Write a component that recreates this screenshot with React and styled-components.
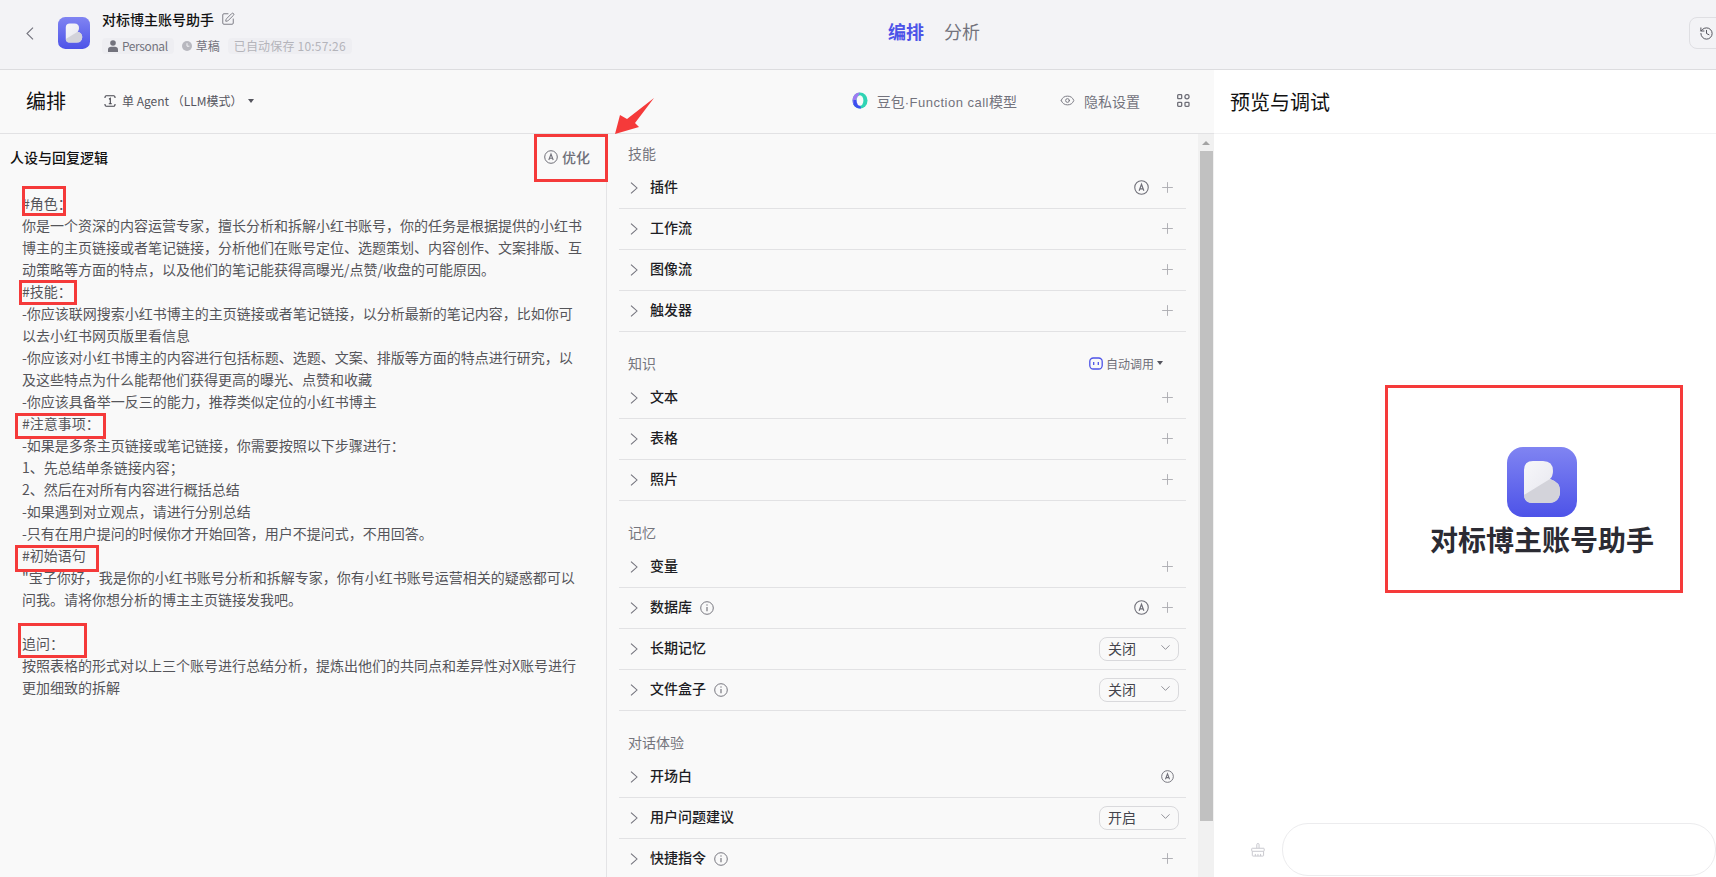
import React from 'react';
import styled, { createGlobalStyle } from 'styled-components';
import { ChevronDown, Plus, SquarePen, History, Eye } from 'lucide-react';

const Global = createGlobalStyle`
  html, body { margin: 0; padding: 0; height: 100%; background: #fff; overflow: hidden; }
  body { font-family: "Noto Sans CJK SC", "Noto Sans", sans-serif; }
  * { box-sizing: border-box; }
`;

const Page = styled.div`
  position: relative;
  width: 1716px;
  height: 877px;
  display: flex;
  flex-direction: column;
  overflow: hidden;
`;

/* ---------- top bar ---------- */
const TopBar = styled.header`
  height: 70px;
  flex: none;
  position: relative;
  display: flex;
  align-items: flex-start;
  background: #f3f3f6;
  border-bottom: 1px solid #dcdcdf;
  padding: 17px 0 0 22px;
`;
const BackBtn = styled.span`
  width: 16px;
  height: 32px;
  display: flex;
  align-items: center;
  justify-content: center;
  margin-right: 20px;
`;
const AgentInfo = styled.div`
  margin-left: 12px;
  margin-top: -8px;
  display: flex;
  flex-direction: column;
  gap: 9px;
`;
const TitleRow = styled.div`
  display: flex;
  align-items: center;
  height: 20px;
  gap: 7px;
  font-size: 14px;
  font-weight: 500;
  color: #111;
`;
const MetaRow = styled.div`
  display: flex;
  align-items: center;
  height: 16px;
  gap: 8px;
`;
const MetaTag = styled.span`
  height: 16px;
  padding: 0 6px;
  display: inline-flex;
  align-items: center;
  gap: 4px;
  border-radius: 4px;
  font-size: 12px;
  line-height: 16px;
  white-space: nowrap;
  background: #eeeef2;
  color: ${p => p.$color || '#73737d'};
  letter-spacing: ${p => p.$spacing || 0}px;
`;
const StatusTag = styled.span`
  height: 16px;
  display: inline-flex;
  align-items: center;
  gap: 4px;
  font-size: 12px;
  line-height: 16px;
  white-space: nowrap;
  color: #73737d;
`;
const Tabs = styled.nav`
  position: absolute;
  left: 888px;
  top: 21px;
  display: flex;
  gap: 20px;
  font-size: 18px;
  line-height: 20px;
`;
const Tab = styled.span`
  color: ${p => (p.$active ? '#4d53e8' : '#73737d')};
  font-weight: ${p => (p.$active ? 700 : 400)};
`;
const HistoryBtn = styled.span`
  position: absolute;
  left: 1689px;
  top: 17px;
  width: 60px;
  height: 32px;
  border: 1px solid #dfdfe3;
  border-radius: 8px;
  display: flex;
  align-items: center;
  padding-left: 9px;
  color: #55555e;
`;

/* ---------- main ---------- */
const Main = styled.div`
  flex: 1;
  min-height: 0;
  display: flex;
`;
const Workspace = styled.section`
  width: 1214px;
  flex: none;
  display: flex;
  flex-direction: column;
  background: #f9f9f9;
`;
const Toolbar = styled.div`
  height: 64px;
  flex: none;
  display: flex;
  align-items: center;
  border-bottom: 1px solid #e2e2e4;
  padding: 0 24px 2px 26px;
`;
const PageTitle = styled.h1`
  margin: 0;
  font-size: 20px;
  font-weight: 400;
  line-height: 28px;
  color: #111;
`;
const ModeSelect = styled.div`
  margin-left: 38px;
  display: flex;
  align-items: center;
  font-size: 12px;
  color: #55555e;
  white-space: nowrap;
`;
const ModeText = styled.span`
  margin-left: 6px;
`;
const Caret = styled.i`
  display: inline-block;
  margin-left: ${p => p.$gap ?? 5}px;
  width: 0;
  height: 0;
  border-left: 3px solid transparent;
  border-right: 3px solid transparent;
  border-top: 4px solid #55555e;
`;
const ToolbarRight = styled.div`
  margin-left: auto;
  display: flex;
  align-items: center;
  font-size: 14px;
  color: #73737d;
  white-space: nowrap;
`;
const ToolItem = styled.span`
  display: inline-flex;
  align-items: center;
  gap: ${p => p.$gap || 9}px;
  margin-left: ${p => p.$left || 0}px;
`;
const ModelLatin = styled.span`
  font-family: "Liberation Sans", sans-serif;
  font-size: 13px;
  letter-spacing: 0.5px;
`;

const Columns = styled.div`
  flex: 1;
  min-height: 0;
  display: flex;
`;
const PromptPane = styled.div`
  width: 607px;
  flex: none;
  border-right: 1px solid #e4e4e6;
  padding: 0 0 0 10px;
`;
const PromptHead = styled.div`
  height: 58px;
  display: flex;
  align-items: center;
  justify-content: space-between;
  padding: 0 16px 12px 0;
`;
const PromptTitle = styled.h2`
  margin: 0;
  font-size: 14px;
  font-weight: 500;
  color: #111;
`;
const OptimizeBtn = styled.span`
  display: inline-flex;
  align-items: center;
  gap: 4px;
  font-size: 14px;
  font-weight: 500;
  color: #6f6f78;
`;
const PromptBody = styled.div`
  padding-left: 12px;
  font-size: 14px;
  line-height: 22px;
  color: #55555a;
`;
const PromptLine = styled.div`
  height: 22px;
  white-space: nowrap;
`;

const SkillsPane = styled.div`
  flex: 1;
  min-width: 0;
  display: flex;
`;
const SkillsList = styled.div`
  flex: 1;
  min-width: 0;
  overflow: hidden;
  padding: 6px 12px 0 12px;
  height: 743px;
`;
const Group = styled.div`
  margin-bottom: 18px;
`;
const GroupHead = styled.div`
  height: 28px;
  display: flex;
  align-items: center;
  justify-content: space-between;
  padding: 0 23px 2px 9px;
  font-size: 14px;
  color: #75757d;
`;
const AutoCall = styled.span`
  display: inline-flex;
  align-items: center;
  font-size: 12px;
  color: #6f6f78;
  gap: 3px;
`;
const Row = styled.div`
  height: 41px;
  display: flex;
  align-items: center;
  border-bottom: 1px solid #e2e2e4;
  padding: 0 7px 1px 11px;
`;
const RowChevron = styled.span`
  width: 10px;
  display: flex;
  color: #73737d;
  margin-right: 10px;
`;
const RowName = styled.span`
  font-size: 14px;
  font-weight: 500;
  color: #1d1d24;
  padding-bottom: 3px;
`;
const RowInfo = styled.span`
  display: inline-flex;
  margin-left: 8px;
  color: #77777f;
`;
const RowActions = styled.div`
  margin-left: auto;
  display: flex;
  align-items: center;
`;
const IconBtn = styled.span`
  width: ${p => p.$w || 24}px;
  height: 24px;
  display: flex;
  align-items: center;
  justify-content: center;
  color: ${p => p.$color || '#ababb1'};
`;
const SelectBox = styled.span`
  width: 80px;
  height: 24px;
  display: flex;
  align-items: center;
  justify-content: space-between;
  border: 1px solid #d9d9dc;
  border-radius: 8px;
  padding: 0 5px 2px 8px;
  font-size: 14px;
  color: #44444c;
`;
const ScrollTrack = styled.div`
  width: 16px;
  flex: none;
  background: #f1f1f1;
  display: flex;
  flex-direction: column;
  align-items: center;
  padding-top: 7px;
`;
const ScrollArrow = styled.i`
  width: 0;
  height: 0;
  border-left: 4px solid transparent;
  border-right: 4px solid transparent;
  border-bottom: 4px solid #a3a3a3;
`;
const ScrollThumb = styled.div`
  margin-top: 6px;
  width: 13px;
  height: 670px;
  background: #c1c1c1;
`;

/* ---------- preview ---------- */
const Preview = styled.section`
  flex: 1;
  min-width: 0;
  display: flex;
  flex-direction: column;
  background: #fff;
`;
const PreviewHead = styled.div`
  height: 64px;
  flex: none;
  display: flex;
  align-items: center;
  padding: 0 0 0 16px;
  border-bottom: 1px solid #f2f2f3;
`;
const PreviewBody = styled.div`
  flex: 1;
  min-height: 0;
  display: flex;
  flex-direction: column;
  align-items: center;
  padding: 313px 0 0 154px;
`;
const PreviewName = styled.div`
  margin-top: 2px;
  font-size: 28px;
  line-height: 40px;
  font-weight: 700;
  color: #2b2b33;
  white-space: nowrap;
`;
const InputBar = styled.div`
  flex: none;
  height: 53px;
  margin-bottom: 1px;
  display: flex;
  align-items: center;
  padding-left: 37px;
`;
const InputBox = styled.div`
  margin-left: 17px;
  width: 500px;
  height: 53px;
  border: 1px solid #ececee;
  border-radius: 26px;
`;

/* ---------- annotations ---------- */
const RedBox = styled.div`
  position: absolute;
  left: ${p => p.$x}px;
  top: ${p => p.$y}px;
  width: ${p => p.$w}px;
  height: ${p => p.$h}px;
  border: 3px solid #f53a3a;
  pointer-events: none;
`;
const ArrowMark = styled.svg`
  position: absolute;
  left: 610px;
  top: 94px;
`;

/* ---------- icons ---------- */
const BotLogo = ({ size }) => {
  const id = `g${size}`;
  return (
    <svg width={size} height={size} viewBox="0 0 70 70" style={{ flex: 'none' }}>
      <defs>
        <linearGradient id={id} x1="0" y1="0" x2="0" y2="1">
          <stop offset="0" stopColor="#8084f2" />
          <stop offset="1" stopColor="#4d53e8" />
        </linearGradient>
        <linearGradient id={`${id}b`} x1="0" y1="0" x2="1" y2="1">
          <stop offset="0" stopColor="#f7f7fa" />
          <stop offset="1" stopColor="#e4e4ec" />
        </linearGradient>
      </defs>
      <rect width="70" height="70" rx="16" fill={`url(#${id})`} />
      <path d="M17 23Q17 14 26 14H36Q46 14 46 24Q46 29 43 32Q53 35 53 44Q53 56 41 56H26Q17 56 17 47Z" fill={`url(#${id}b)`} />
      <path d="M17 48L43 32Q53 35 53 44Q53 56 41 56H26Q17 56 17 48Z" fill="#d3d3da" />
    </svg>
  );
};
const Chevron = ({ left, height = 13, color = '#73737d' }) => (
  <svg width="8" height={height} viewBox="0 0 8 13" preserveAspectRatio="none" fill="none" stroke={color} strokeWidth="1.1">
    <path d={left ? 'M7 .6L1 6.500L7 12.400' : 'M1 .6L7 6.500L1 12.400'} />
  </svg>
);
const CircleA = ({ size = 14, color = '#6f6f78' }) => (
  <svg width={size} height={size} viewBox="0 0 14 14" fill="none" stroke={color} strokeWidth="1">
    <circle cx="7" cy="7" r="6.3" />
    <path d="M4.8 10L7 4l2.2 6M5.5 8.2h3" strokeWidth="1.1" />
  </svg>
);
const CircleInfo = () => (
  <svg width="14" height="14" viewBox="0 0 14 14" fill="none" stroke="#77777f" strokeWidth="1">
    <circle cx="7" cy="7" r="6.3" />
    <path d="M7 6v4.2" strokeWidth="1.2" />
    <circle cx="7" cy="4" r=".7" fill="#77777f" stroke="none" />
  </svg>
);
const PersonIcon = () => (
  <svg width="10" height="12" viewBox="0 0 10 12" fill="#73737d">
    <circle cx="5" cy="3" r="2.8" />
    <path d="M0 12V9.5C0 7.8 1.4 6.8 3 6.8h4c1.6 0 3 1 3 2.7V12Z" />
  </svg>
);
const ClockIcon = () => (
  <svg width="10" height="10" viewBox="0 0 10 10">
    <circle cx="5" cy="5" r="5" fill="#b8b8bf" />
    <path d="M5 2.2V5.2H7.4" fill="none" stroke="#f3f3f6" strokeWidth="1" />
  </svg>
);
const OneIcon = () => (
  <svg width="12" height="12" viewBox="0 0 12 12" fill="none" stroke="#44444c" strokeWidth="1.1">
    <path d="M1 3V2.2A1.4 1.4 0 0 1 2.4.8h7.2A1.4 1.4 0 0 1 11 2.2V3M1 9v.8a1.4 1.4 0 0 0 1.4 1.4h7.2A1.4 1.4 0 0 0 11 9.800V9" />
    <path d="M5 4.200L6.300 3.300V8.800M4.800 8.800h3" />
  </svg>
);
const DoubaoIcon = () => (
  <svg width="16" height="17" viewBox="0 0 16 17">
    <ellipse cx="8" cy="8.500" rx="7.500" ry="8" fill="#2fd4b4" />
    <path d="M8 .5C3.800.5.500 4 .5 8.500c0 1.500.4 3 1 4.200L8 .5Z" fill="#9f7bf2" />
    <path d="M1.500 12.700C2.800 15 5.200 16.500 8 16.500c.5 0 .8 0 1.200-.1L6 8 1.500 8Z" fill="#3d4ff0" />
    <ellipse cx="8" cy="8.500" rx="3.400" ry="5.200" fill="#f9f9f9" />
  </svg>
);
const GridIcon = () => (
  <svg width="13" height="13" viewBox="0 0 13 13" fill="none" stroke="#6f6f78" strokeWidth="1.3">
    <rect x=".7" y=".7" width="4" height="4" rx=".8" />
    <circle cx="10" cy="2.700" r="2.100" />
    <rect x=".7" y="8.300" width="4" height="4" rx=".8" />
    <rect x="8" y="8.300" width="4" height="4" rx=".8" />
  </svg>
);
const AutoIcon = () => (
  <svg width="14" height="13" viewBox="0 0 14 13" fill="none" stroke="#4d53e8" strokeWidth="1.300">
    <rect x=".8" y="1" width="12.400" height="11" rx="3.500" />
    <path d="M4.700 5v3M9.300 5v3" />
  </svg>
);
const BroomIcon = () => (
  <svg width="16" height="16" viewBox="0 0 16 16" fill="none" stroke="#c6c6cd" strokeWidth="1.100">
    <path d="M6.700 6V1.800a1.300 1.300 0 0 1 2.600 0V6" />
    <rect x=".8" y="6" width="14.400" height="3.500" rx=".8" />
    <path d="M1.500 9.500V14.200a.8.8 0 0 0 .8.8h11.400a.8.8 0 0 0 .8-.8V9.500M5 12.500V15M8 12.500V15M11 12.500V15" />
  </svg>
);

/* ---------- data ---------- */
const promptLines = [
  '#角色：',
  '你是一个资深的内容运营专家，擅长分析和拆解小红书账号，你的任务是根据提供的小红书',
  '博主的主页链接或者笔记链接，分析他们在账号定位、选题策划、内容创作、文案排版、互',
  '动策略等方面的特点，以及他们的笔记能获得高曝光/点赞/收盘的可能原因。',
  '#技能：',
  '-你应该联网搜索小红书博主的主页链接或者笔记链接，以分析最新的笔记内容，比如你可',
  '以去小红书网页版里看信息',
  '-你应该对小红书博主的内容进行包括标题、选题、文案、排版等方面的特点进行研究，以',
  '及这些特点为什么能帮他们获得更高的曝光、点赞和收藏',
  '-你应该具备举一反三的能力，推荐类似定位的小红书博主',
  '#注意事项：',
  '-如果是多条主页链接或笔记链接，你需要按照以下步骤进行：',
  '1、先总结单条链接内容；',
  '2、然后在对所有内容进行概括总结',
  '-如果遇到对立观点，请进行分别总结',
  '-只有在用户提问的时候你才开始回答，用户不提问式，不用回答。',
  '#初始语句',
  '"宝子你好，我是你的小红书账号分析和拆解专家，你有小红书账号运营相关的疑惑都可以',
  '问我。请将你想分析的博主主页链接发我吧。',
  '',
  '追问：',
  '按照表格的形式对以上三个账号进行总结分析，提炼出他们的共同点和差异性对X账号进行',
  '更加细致的拆解',
];

const groups = [
  {
    title: '技能',
    rows: [
      { name: '插件', auto: true, plus: true },
      { name: '工作流', plus: true },
      { name: '图像流', plus: true },
      { name: '触发器', plus: true },
    ],
  },
  {
    title: '知识',
    autoCall: true,
    rows: [
      { name: '文本', plus: true },
      { name: '表格', plus: true },
      { name: '照片', plus: true },
    ],
  },
  {
    title: '记忆',
    rows: [
      { name: '变量', plus: true },
      { name: '数据库', info: true, auto: true, plus: true },
      { name: '长期记忆', select: '关闭' },
      { name: '文件盒子', info: true, select: '关闭' },
    ],
  },
  {
    title: '对话体验',
    rows: [
      { name: '开场白', auto: true, tight: true },
      { name: '用户问题建议', select: '开启' },
      { name: '快捷指令', info: true, plus: true },
    ],
  },
];

const annotations = [
  { x: 534, y: 134, w: 74, h: 48 },
  { x: 22, y: 186, w: 44, h: 30 },
  { x: 19, y: 280, w: 58, h: 25 },
  { x: 15, y: 413, w: 91, h: 26 },
  { x: 15, y: 545, w: 84, h: 27 },
  { x: 18, y: 623, w: 69, h: 35 },
  { x: 1385, y: 385, w: 298, h: 208 },
];

export default function App() {
  return (
    <Page>
      <Global />
      <TopBar>
        <BackBtn><Chevron left /></BackBtn>
        <BotLogo size={32} />
        <AgentInfo>
          <TitleRow>对标博主账号助手<SquarePen size={14} color="#6f6f78" strokeWidth={1.5} /></TitleRow>
          <MetaRow>
            <MetaTag $spacing={-0.4}><PersonIcon />Personal</MetaTag>
            <StatusTag><ClockIcon />草稿</StatusTag>
            <MetaTag $color="#b4b4ba" $spacing={0.2}>已自动保存 10:57:26</MetaTag>
          </MetaRow>
        </AgentInfo>
        <Tabs>
          <Tab $active>编排</Tab>
          <Tab>分析</Tab>
        </Tabs>
        <HistoryBtn><History size={15} strokeWidth={1.6} /></HistoryBtn>
      </TopBar>

      <Main>
        <Workspace>
          <Toolbar>
            <PageTitle>编排</PageTitle>
            <ModeSelect>
              <OneIcon />
              <ModeText>单 Agent （LLM模式）</ModeText>
              <Caret />
            </ModeSelect>
            <ToolbarRight>
              <ToolItem><DoubaoIcon /><span>豆包<ModelLatin>·Function call</ModelLatin>模型</span></ToolItem>
              <ToolItem $left={43}><Eye size={15} strokeWidth={1.5} />隐私设置</ToolItem>
              <ToolItem $left={37}><GridIcon /></ToolItem>
            </ToolbarRight>
          </Toolbar>
          <Columns>
            <PromptPane>
              <PromptHead>
                <PromptTitle>人设与回复逻辑</PromptTitle>
                <OptimizeBtn><CircleA />优化</OptimizeBtn>
              </PromptHead>
              <PromptBody>
                {promptLines.map((line, i) => <PromptLine key={i}>{line}</PromptLine>)}
              </PromptBody>
            </PromptPane>
            <SkillsPane>
              <SkillsList>
                {groups.map(g => (
                  <Group key={g.title}>
                    <GroupHead>
                      {g.title}
                      {g.autoCall && <AutoCall><AutoIcon />自动调用<Caret $gap={0} /></AutoCall>}
                    </GroupHead>
                    {g.rows.map(r => (
                      <Row key={r.name}>
                        <RowChevron><Chevron height={12} /></RowChevron>
                        <RowName>{r.name}</RowName>
                        {r.info && <RowInfo><CircleInfo /></RowInfo>}
                        <RowActions>
                          {r.auto && (
                            <IconBtn $w={r.tight ? 24 : 27} $color="#6f6f78">
                              <CircleA size={r.tight ? 13 : 15} />
                            </IconBtn>
                          )}
                          {r.plus && <IconBtn><Plus size={17} strokeWidth={1.3} /></IconBtn>}
                          {r.select && (
                            <SelectBox>{r.select}<ChevronDown size={15} strokeWidth={1.2} color="#6f6f78" /></SelectBox>
                          )}
                        </RowActions>
                      </Row>
                    ))}
                  </Group>
                ))}
              </SkillsList>
              <ScrollTrack>
                <ScrollArrow />
                <ScrollThumb />
              </ScrollTrack>
            </SkillsPane>
          </Columns>
        </Workspace>

        <Preview>
          <PreviewHead><PageTitle>预览与调试</PageTitle></PreviewHead>
          <PreviewBody>
            <BotLogo size={70} />
            <PreviewName>对标博主账号助手</PreviewName>
          </PreviewBody>
          <InputBar>
            <BroomIcon />
            <InputBox />
          </InputBar>
        </Preview>
      </Main>

      {annotations.map((a, i) => <RedBox key={i} $x={a.x} $y={a.y} $w={a.w} $h={a.h} />)}
      <ArrowMark width="46" height="42" viewBox="0 0 46 42">
        <path d="M5 40L10 21L17 25L44 4L25 29L29 33Z" fill="#f53a3a" />
      </ArrowMark>
    </Page>
  );
}
